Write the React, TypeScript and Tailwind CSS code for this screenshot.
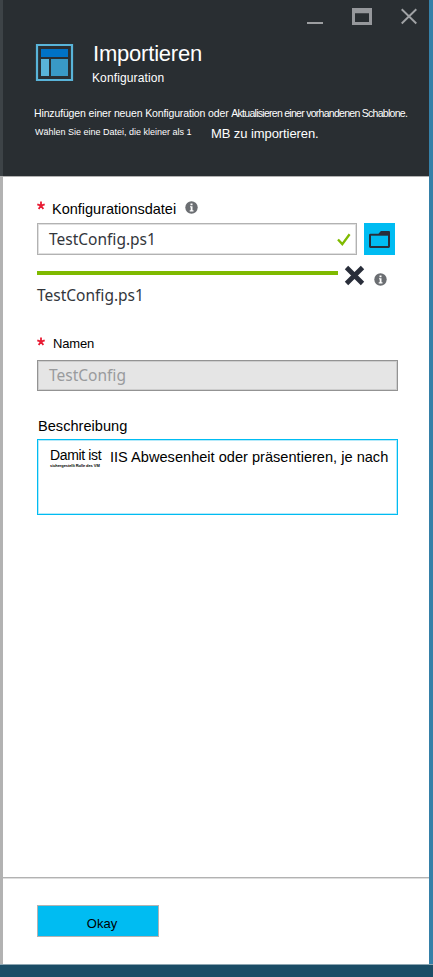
import React from "react";

function Info({ className }: { className: string }) {
  return (
    <svg className={className} width="13" height="13" viewBox="0 0 13 13">
      <circle cx="6.5" cy="6.5" r="6.2" fill="#6b6e72" />
      <path d="M5 5.2h2.500v4.100H8.500v1.100H4.700v-1.100h1V6.200H5zM5.500 2.500h2v1.700h-2z" fill="#fff" />
    </svg>
  );
}

function Star() {
  return (
    <svg className="shrink-0" width="8" height="9" viewBox="0 0 8 9">
      <path d="M4 4.600V.4M4 4.600L.3 3.300M4 4.600l3.700-1.300M4 4.600L1.700 8.100M4 4.600l2.300 3.500" stroke="#e81c34" strokeWidth="1.800" fill="none" />
    </svg>
  );
}

export default function App() {
  return (
    <div className="flex h-[977px] w-[433px] flex-col overflow-hidden bg-[#1b4d66] font-['Liberation_Sans',Arial,sans-serif] whitespace-nowrap text-black">
      <div className="flex h-[964px] shrink-0">
        <div className="w-[3px] shrink-0 bg-[#b2b2b2]">
          <div className="h-[176px] bg-[#3d4347]" />
        </div>
        <main className="flex w-[426px] shrink-0 flex-col bg-white">
          <header className="h-[177px] shrink-0 border-b border-[#b2b2b2] bg-[#292e32] text-white">
            <div className="flex h-[43px] items-start pl-[304px] pt-2">
              <svg width="112" height="18" viewBox="0 0 112 18">
                <path d="M0 14h16v2H0z" fill="#9c9ea1" />
                <path fillRule="evenodd" d="M45 0h20v17H45zM48 5.3v8.7h14V5.3z" fill="#96989c" />
                <path d="M94.7 1.2l14.6 14.3M109.3 1.2L94.7 15.5" stroke="#a0a2a5" strokeWidth="1.9" />
              </svg>
            </div>
            <div className="flex h-[61px] pl-8">
              <svg className="shrink-0" width="39" height="39" viewBox="0 0 39 39">
                <path d="M2 2h35v35H2z" fill="none" stroke="#59b4d9" strokeWidth="2.2" />
                <path d="M6 6h27v8H6z" fill="#0072c6" />
                <path d="M6 16h8v17H6z" fill="#59b4d9" />
                <path d="M16 16h17v17H16z" fill="#3999c6" />
              </svg>
              <div className="pl-[18px]">
                <h1 className="h-[26px] pl-px text-[22px] leading-[22px] tracking-[-0.2px]">Importieren</h1>
                <p className="text-[12px] leading-[18px] tracking-[0.12px]">Konfiguration</p>
              </div>
            </div>
            <p className="h-[20px] pl-[31px] text-[10.5px] leading-[18px]">
              <span className="tracking-[-0.14px]">Hinzufügen einer neuen Konfiguration oder </span>
              <span className="tracking-[-0.72px]">Aktualisieren einer vorhandenen Schablone.</span>
            </p>
            <div className="flex pl-8">
              <p className="w-[176px] text-[9px] leading-[16px]">Wählen Sie eine Datei, die kleiner als 1</p>
              <p className="text-[13px] leading-[20px] tracking-[-0.08px]">MB zu importieren.</p>
            </div>
          </header>

          <section className="h-[700px] shrink-0 pl-[34px]">
            <div className="flex h-[46px] pt-6">
              <Star />
              <label className="ml-[7px] w-[125px] text-[14.5px] leading-[17px]">Konfigurationsdatei</label>
              <Info className="ml-2" />
            </div>
            <div className="flex h-8 gap-[7px]">
              <div className="flex w-[320px] items-center border border-[#b2b2b2] pl-[11px] font-['Noto_Sans',sans-serif] text-[15.5px] text-[#32363c] shadow-[inset_0_0_0_1px_#e0e0e0]">
                <span className="w-[288px] leading-[30px]">TestConfig.ps1</span>
                <svg width="14" height="13" viewBox="0 0 14 13">
                  <path d="M1 6.5l4.3 4.6L12.6 1.3" stroke="#7fba00" strokeWidth="2.3" fill="none" />
                </svg>
              </div>
              <button className="flex w-[31px] items-center justify-center bg-[#00bcf2]">
                <svg width="21" height="19" viewBox="0 0 21 19">
                  <path d="M0 5.200q0-1.400 1.400-1.400h8L11.900 1H20q1 0 1 1v14.500q0 1.400-1.400 1.400H1.400Q0 17.900 0 16.500z" fill="#292e3a" />
                  <path d="M2 5.700h17v10.300H2z" fill="#00bcf2" />
                </svg>
              </button>
            </div>
            <div className="flex h-[32px] items-start pt-[10px]">
              <div className="mt-[6px] h-1 w-[301px] bg-[#7fba00]" />
              <svg className="ml-[6px]" width="21" height="21" viewBox="0 0 21 21">
                <path d="M2.500 2.500l16 16M18.500 2.500l-16 16" stroke="#292e3a" strokeWidth="4.800" />
              </svg>
              <Info className="ml-[9px] mt-[8px]" />
            </div>
            <p className="h-[50px] font-['Noto_Sans',sans-serif] text-[15.5px] leading-[17px] text-[#32363c]">TestConfig.ps1</p>
            <div className="flex h-[23px]">
              <Star />
              <label className="ml-2 text-[13px] leading-[13px] tracking-[-0.15px]">Namen</label>
            </div>
            <div className="h-[31px] w-[361px] border border-[#939393] bg-[#e5e5e5] pl-[11px] font-['Noto_Sans',sans-serif] text-[15.5px] leading-[29px] text-[#999b9d] shadow-[inset_0_0_0_1px_#cdcdcd]">TestConfig</div>
            <label className="block h-[48px] pl-px pt-[26px] text-[14.6px] leading-[18px]">Beschreibung</label>
            <div className="flex h-[76px] w-[361px] border border-[#00bcf2] pl-3 pt-[8px] shadow-[inset_0_0_0_1px_#b5eafa]">
              <div className="w-[60px]">
                <p className="text-[14px] leading-[14px] tracking-[-0.36px]">Damit ist</p>
                <p className="h-1 text-[4px] leading-[7px] font-bold tracking-[-0.08px]">sichergestellt Rolle des VM</p>
              </div>
              <p className="text-[14.6px] leading-[18px]">IIS Abwesenheit oder präsentieren, je nach</p>
            </div>
          </section>

          <footer className="h-[87px] shrink-0 border-t border-[#b2b2b2] pl-[34px] pt-[27px] shadow-[inset_0_1px_0_#dedede]">
            <button className="h-8 w-[122px] border border-[#b2b2b2] bg-[#00bcf2] pl-2 pt-[5px] text-[13px] leading-[25px]">Okay</button>
          </footer>
        </main>
        <div className="w-1 shrink-0 bg-[#3580a8]" />
      </div>
      <div className="h-px shrink-0 bg-[#8da6b2]" />
    </div>
  );
}
